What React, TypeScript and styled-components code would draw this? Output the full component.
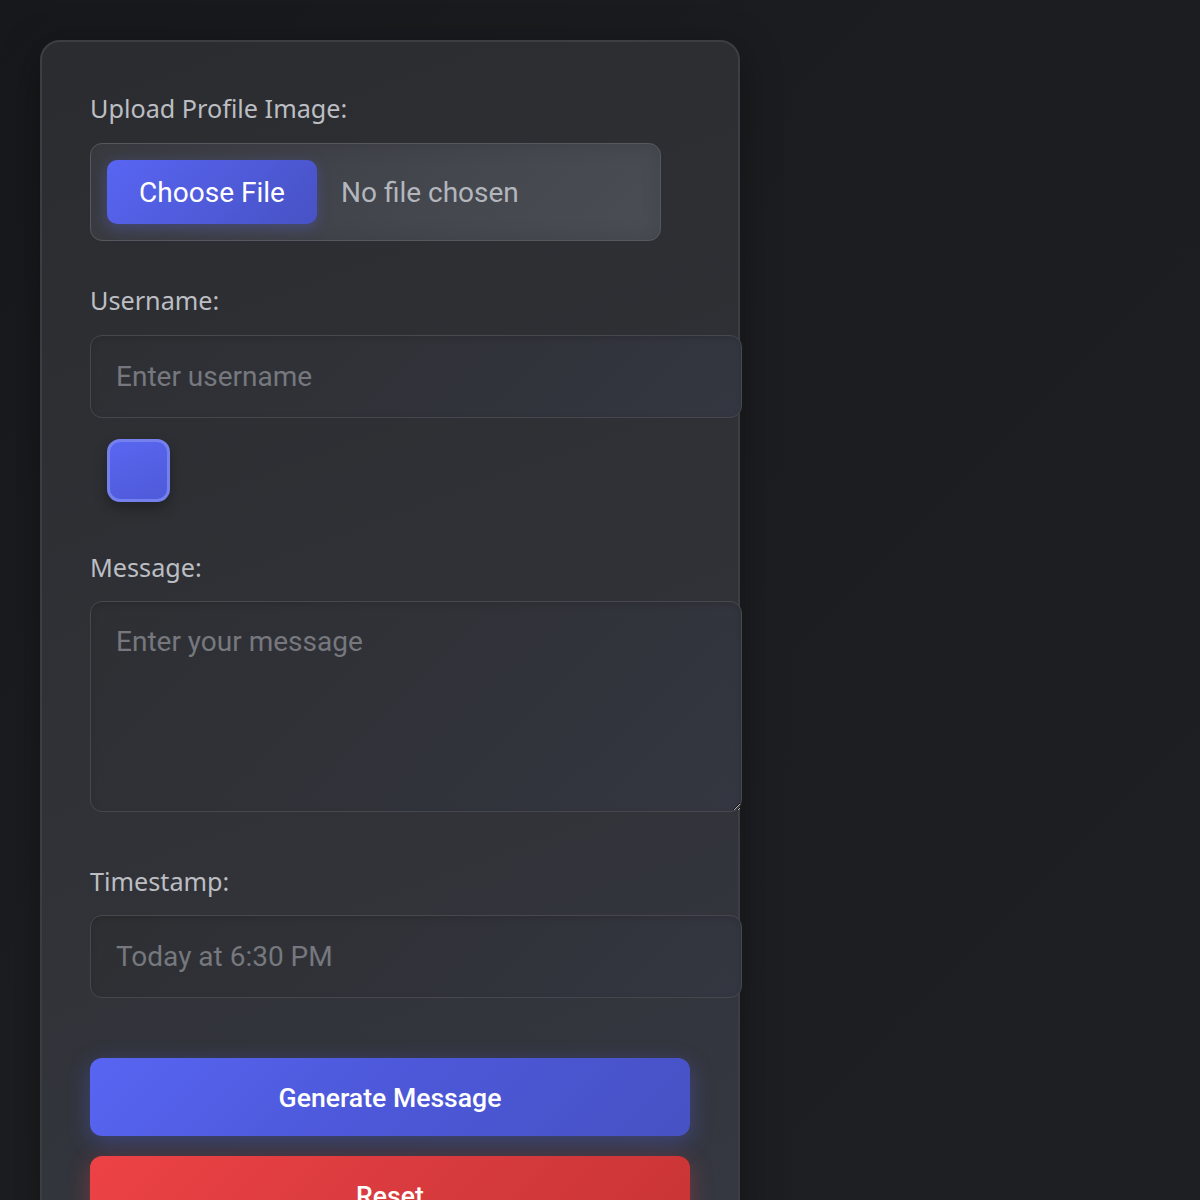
import React from "react";
import styled, { createGlobalStyle } from "styled-components";

const Global = createGlobalStyle`
  html, body {
    margin: 0;
    padding: 0;
    min-height: 100%;
  }
  body {
    background: linear-gradient(135deg, #17181b 0%, #1c1d20 40%, #1e1f23 100%);
    min-height: 1200px;
    font-family: "Noto Sans", "Open Sans", sans-serif;
  }
`;

const Page = styled.div`
  padding: 40px;
  min-height: 1200px;
  box-sizing: border-box;
`;

const Card = styled.form`
  width: 700px;
  box-sizing: border-box;
  padding: 48px 48px 60px;
  border: 2px solid #3c3e43;
  border-radius: 20px;
  background: linear-gradient(160deg, #2b2c30 0%, #303237 55%, #363943 100%);
  box-shadow: 0 10px 40px rgba(0, 0, 0, 0.35);
`;

const Group = styled.div<{ $gap?: number }>`
  display: flex;
  flex-direction: column;
  align-items: flex-start;
  margin-bottom: ${(p) => p.$gap ?? 40}px;
`;

const Label = styled.label<{ $space?: number }>`
  display: block;
  font-family: "Noto Sans", "Open Sans", sans-serif;
  font-size: 25.2px;
  line-height: 36px;
  color: #bcbec3;
  margin-bottom: ${(p) => p.$space ?? 17}px;
`;

const FileBox = styled.div`
  display: flex;
  align-items: center;
  gap: 24px;
  width: 571px;
  box-sizing: border-box;
  padding: 16px;
  border: 1px solid #55585f;
  border-radius: 12px;
  background: linear-gradient(135deg, #3a3c42 0%, #44474e 60%, #4a4d54 100%);
  box-shadow: inset 0 0 20px rgba(0, 0, 0, 0.12);
`;

const ChooseButton = styled.button`
  height: 64px;
  width: 210px;
  border: none;
  border-radius: 10px;
  background: linear-gradient(135deg, #5865f2 0%, #4752c4 100%);
  color: #ffffff;
  font-family: Roboto, sans-serif;
  font-size: 28px;
  box-shadow: 0 4px 14px rgba(88, 101, 242, 0.3);
  cursor: pointer;
`;

const FileText = styled.span`
  font-family: Roboto, sans-serif;
  font-size: 28px;
  color: #b3b6bc;
`;

const TextInput = styled.input`
  width: 600px;
  padding: 25px;
  line-height: 31px;
  box-sizing: content-box;
  height: 31px;
  border: 1px solid #46484e;
  border-radius: 12px;
  background: linear-gradient(135deg, #2d2f33 0%, #31333a 60%, #343741 100%);
  color: #dcddde;
  font-family: Roboto, sans-serif;
  font-size: 28px;
  outline: none;
  box-shadow: inset 0 2px 6px rgba(0, 0, 0, 0.12);
  &::placeholder {
    color: #76787e;
  }
`;

const TextArea = styled.textarea`
  width: 600px;
  height: 159px;
  padding: 25px;
  line-height: 30px;
  box-sizing: content-box;
  border: 1px solid #46484e;
  border-radius: 12px;
  background: linear-gradient(135deg, #2d2f33 0%, #31333a 60%, #343741 100%);
  color: #dcddde;
  font-family: Roboto, sans-serif;
  font-size: 28px;
  outline: none;
  resize: both;
  display: block;
  box-shadow: inset 0 2px 6px rgba(0, 0, 0, 0.12);
  &::placeholder {
    color: #76787e;
  }
`;

const Swatch = styled.input`
  -webkit-appearance: none;
  appearance: none;
  width: 63px;
  height: 63px;
  margin: 21px 0 0 17px;
  padding: 0;
  box-sizing: border-box;
  border: 3px solid #7480ee;
  border-radius: 13px;
  background: linear-gradient(160deg, #5966f0 0%, #4e5ad8 100%);
  box-shadow: 0 6px 14px rgba(0, 0, 0, 0.3);
  cursor: pointer;
  &::-webkit-color-swatch-wrapper {
    padding: 0;
  }
  &::-webkit-color-swatch {
    border: none;
    background: transparent !important;
  }
`;

const Button = styled.button<{ $variant: "primary" | "danger" }>`
  display: block;
  width: 600px;
  height: 78px;
  border: none;
  border-radius: 12px;
  margin-bottom: 20px;
  color: #ffffff;
  font-family: Roboto, sans-serif;
  font-size: 26.6px;
  font-weight: 500;
  cursor: pointer;
  background: ${(p) =>
    p.$variant === "primary"
      ? "linear-gradient(135deg, #5865f2 0%, #4c58d8 50%, #4752c4 100%)"
      : "linear-gradient(135deg, #ed4245 0%, #d93b3e 50%, #c93434 100%)"};
  box-shadow: ${(p) =>
    p.$variant === "primary"
      ? "0 6px 22px rgba(88, 101, 242, 0.35)"
      : "0 6px 22px rgba(237, 66, 69, 0.35)"};
`;

export default function App() {
  return (
    <>
      <Global />
      <Page>
        <Card onSubmit={(e) => e.preventDefault()}>
          <Group $gap={41}>
            <Label>Upload Profile Image:</Label>
            <FileBox>
              <ChooseButton type="button">Choose File</ChooseButton>
              <FileText>No file chosen</FileText>
            </FileBox>
          </Group>
          <Group $gap={47}>
            <Label htmlFor="username">Username:</Label>
            <TextInput id="username" placeholder="Enter username" />
            <Swatch type="color" defaultValue="#5865f2" aria-label="Color" />
          </Group>
          <Group $gap={51}>
            <Label htmlFor="message" $space={16}>
              Message:
            </Label>
            <TextArea id="message" placeholder="Enter your message" />
          </Group>
          <Group $gap={60}>
            <Label htmlFor="timestamp" $space={16}>
              Timestamp:
            </Label>
            <TextInput id="timestamp" placeholder="Today at 6:30 PM" />
          </Group>
          <Button type="submit" $variant="primary">
            Generate Message
          </Button>
          <Button type="button" $variant="danger">
            Reset
          </Button>
        </Card>
      </Page>
    </>
  );
}
